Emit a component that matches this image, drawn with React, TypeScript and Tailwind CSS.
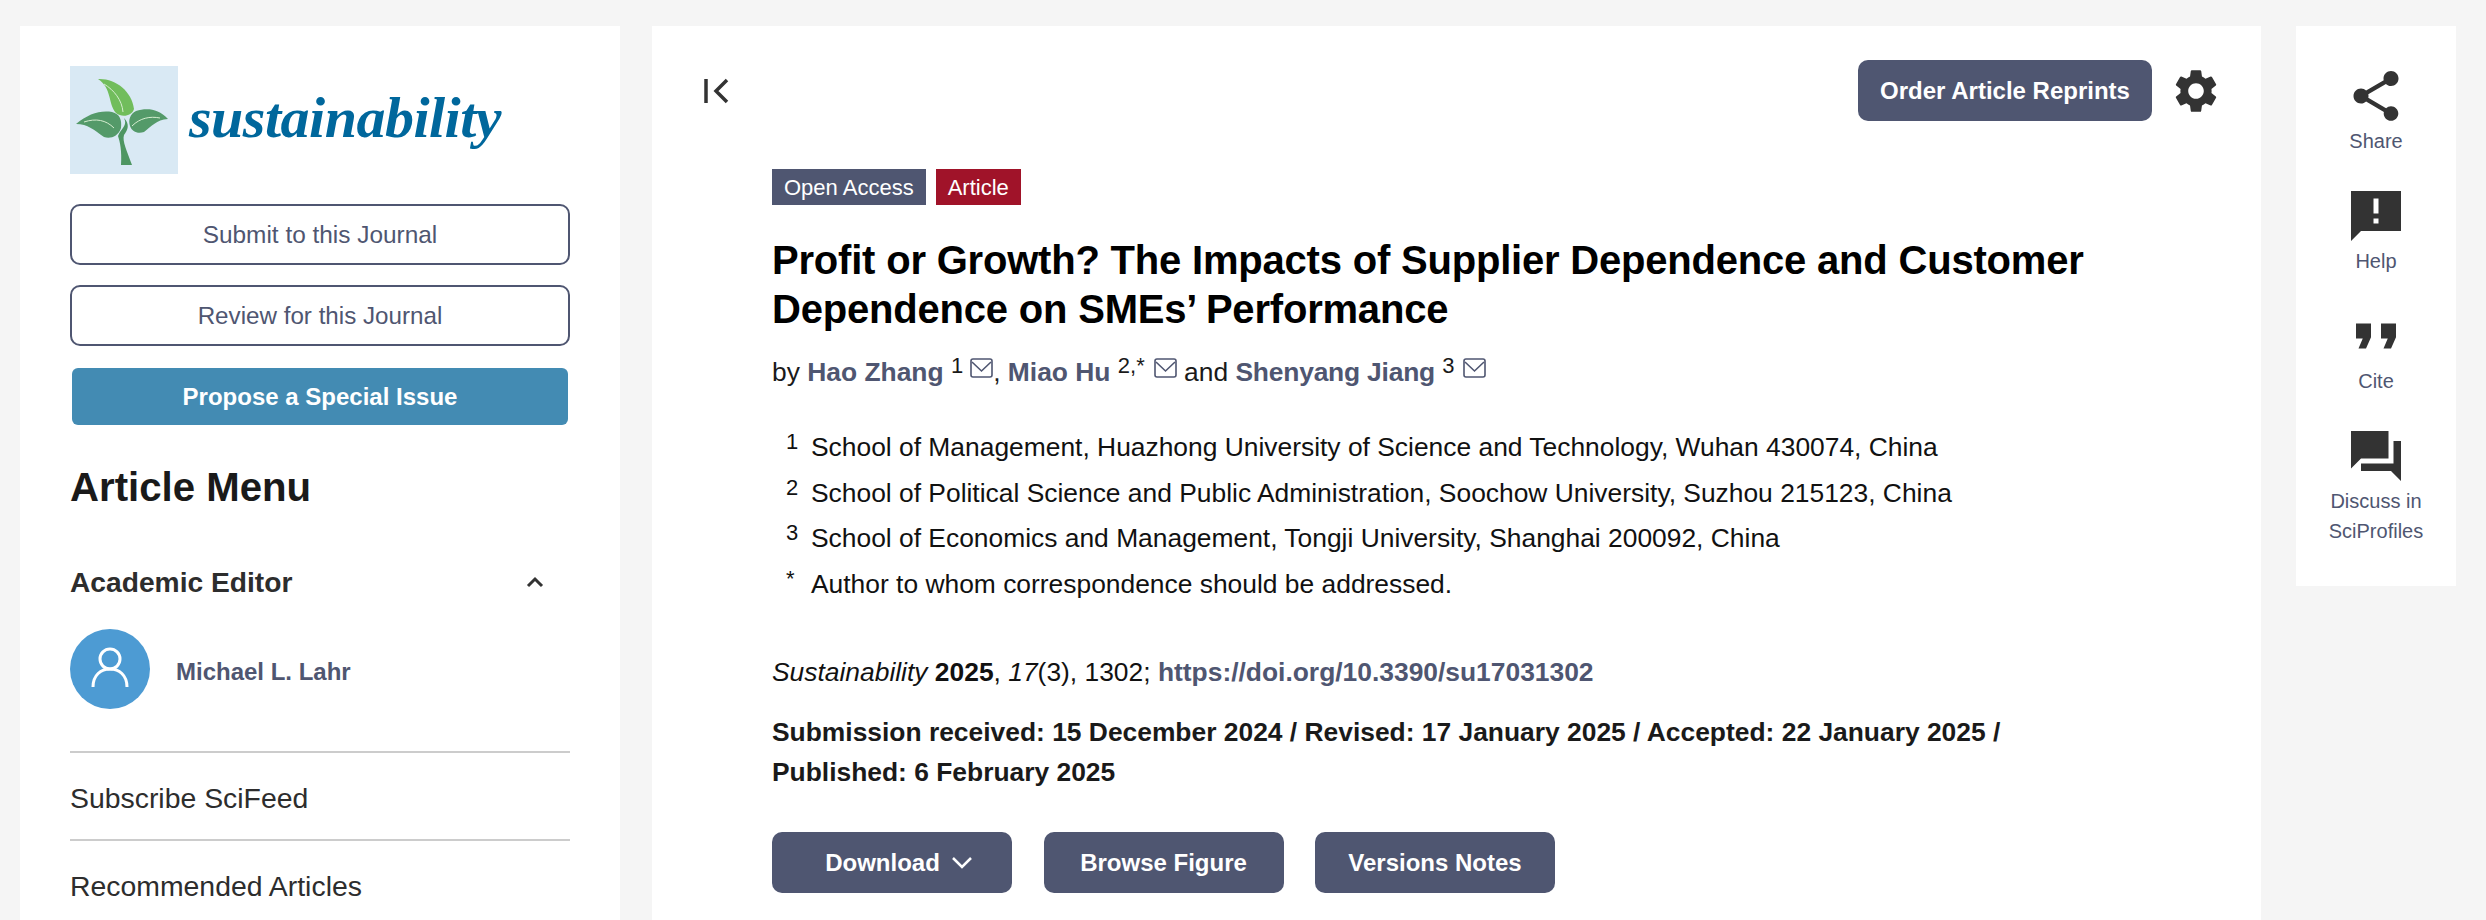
const SANS = "font-['Liberation_Sans',Arial,sans-serif]";

function Logo() {
  return (
    <div className="flex items-center gap-[10px]">
      <svg width="108" height="108" viewBox="0 0 108 108" className="shrink-0">
        <rect width="108" height="108" fill="#d9e9f4" />
        <path d="M54 52 C60 58 58 64 54 69 C52 75 57 85 62 99 L51 99 C52 85 50 76 48 70 C51 62 58 60 54 52Z" fill="#4e9662" />
        <path d="M28 13 C45 12 62 25 64 43 C62 50 52 52 46 47 C38 38 42 22 28 13Z" fill="#71bd5c" />
        <path d="M6 58 C18 48 30 44 42 46 C50 48 52 54 51 62 C48 71 40 73 34 71 C24 64 18 58 6 58Z" fill="#549a69" />
        <path d="M98 53 C88 42 76 42 66 45 C60 48 58 54 60 60 C62 66 68 68 74 66 C82 60 86 54 98 53Z" fill="#549a69" />
        <path d="M34 18 C44 24 52 34 53 46" stroke="#d6eed0" strokeWidth="1" fill="none" />
        <path d="M14 56 C26 52 36 54 44 62" stroke="#d6eed0" strokeWidth="1" fill="none" />
        <path d="M90 52 C80 50 70 52 62 60" stroke="#d6eed0" strokeWidth="1" fill="none" />
      </svg>
      <span className="font-['Liberation_Serif',serif] italic font-bold text-[58px] leading-none text-[#00679c] tracking-[-0.5px] pb-[5px] pl-[1px]">sustainability</span>
    </div>
  );
}

function Sidebar() {
  return (
    <aside className={`w-[600px] shrink-0 bg-white pl-[50px] pr-[50px] pt-[40px] overflow-hidden ${SANS}`}>
      <Logo />
      <div className="mt-[30px] flex flex-col">
        <a className="h-[61px] pt-[1px] flex items-center justify-center border-2 border-[#4f5671] rounded-[10px] text-[24.4px] text-[#4f5671]">Submit to this Journal</a>
        <a className="mt-[20px] h-[61px] pt-[1px] flex items-center justify-center border-2 border-[#4f5671] rounded-[10px] text-[24.2px] text-[#4f5671]">Review for this Journal</a>
        <a className="mt-[22px] mx-[2px] h-[57px] flex items-center justify-center bg-[#438bb3] rounded-[6px] text-[24px] font-bold text-white">Propose a Special Issue</a>
      </div>
      <h2 className="mt-[40px] text-[40.2px] leading-[46px] font-bold text-[#1a1a1a]">Article Menu</h2>
      <div className="mt-[53px] flex items-center justify-between pr-[26px]">
        <span className="text-[28.2px] leading-[36px] font-bold text-[#2d2d2d]">Academic Editor</span>
        <svg width="18" height="12" viewBox="0 0 18 12" fill="none" stroke="#333" strokeWidth="3">
          <path d="M2 10 L9 3 L16 10" />
        </svg>
      </div>
      <div className="mt-[29px] flex items-center gap-[26px]">
        <div className="w-[80px] h-[80px] rounded-full bg-[#4d9bd3] flex items-center justify-center">
          <svg width="40" height="44" viewBox="0 0 40 44" fill="none" stroke="white" strokeWidth="3">
            <circle cx="20" cy="12" r="10" />
            <path d="M3 40 C3 28 11 22 20 22 C29 22 37 28 37 40" />
          </svg>
        </div>
        <span className="text-[24px] font-bold text-[#4f5671] pt-[6px]">Michael L. Lahr</span>
      </div>
      <div className="mt-[42px] border-t-2 border-[#cccccc] h-[88px] pt-[4px] flex items-center text-[28.4px] text-[#2d2d2d]">Subscribe SciFeed</div>
      <div className="border-t-2 border-[#cccccc] h-[88px] pt-[5px] flex items-center text-[28.4px] text-[#2d2d2d]">Recommended Articles</div>
    </aside>
  );
}

function Sup({ children }: { children: React.ReactNode }) {
  return <span className="text-[22px] align-[8px] leading-none">{children}</span>;
}

function Mail({ className }: { className?: string }) {
  return (
    <svg width="23" height="20" viewBox="0 0 23 20" fill="none" stroke="#4f5671" strokeWidth="1.6" className={`inline-block align-[3px] ${className ?? ""}`}>
      <rect x="1" y="1" width="21" height="18" rx="2" />
      <path d="M2 4 L11.5 13 L21 4" />
    </svg>
  );
}

const affiliations = [
  ["1", "School of Management, Huazhong University of Science and Technology, Wuhan 430074, China"],
  ["2", "School of Political Science and Public Administration, Soochow University, Suzhou 215123, China"],
  ["3", "School of Economics and Management, Tongji University, Shanghai 200092, China"],
  ["*", "Author to whom correspondence should be addressed."],
];

function ActionButton({ children }: { children: React.ReactNode }) {
  return (
    <button className="h-[61px] w-[240px] flex items-center justify-center rounded-[10px] bg-[#4f5671] text-white text-[24px] font-bold">
      {children}
    </button>
  );
}

function Main() {
  return (
    <main className={`flex-1 bg-white pt-[34px] overflow-hidden ${SANS}`}>
      <div className="flex items-center justify-between pl-[50px] pr-[39px]">
        <svg width="28" height="26" viewBox="0 0 28 26" fill="none" stroke="#333" strokeWidth="3.5">
          <path d="M4 1 V25" />
          <path d="M25 2 L14 13 L25 24" />
        </svg>
        <div className="flex items-center gap-[18px]">
          <button className="h-[61px] w-[294px] rounded-[10px] bg-[#4f5671] text-white text-[24px] font-bold">Order Article Reprints</button>
          <svg width="52" height="52" viewBox="0 0 24 24" fill="#333">
            <path d="M19.14 12.94c.04-.3.06-.61.06-.94 0-.32-.02-.64-.07-.94l2.03-1.58c.18-.14.23-.41.12-.61l-1.92-3.32c-.12-.22-.37-.29-.59-.22l-2.39.96c-.5-.38-1.03-.7-1.62-.94l-.36-2.54c-.04-.24-.24-.41-.48-.41h-3.84c-.24 0-.43.17-.47.41l-.36 2.54c-.59.24-1.13.57-1.62.94l-2.39-.96c-.22-.08-.47 0-.59.22L2.74 8.87c-.12.21-.08.47.12.61l2.03 1.58c-.05.3-.09.63-.09.94s.02.64.07.94l-2.03 1.58c-.18.14-.23.41-.12.61l1.92 3.32c.12.22.37.29.59.22l2.39-.96c.5.38 1.03.7 1.62.94l.36 2.54c.05.24.24.41.48.41h3.84c.24 0 .44-.17.47-.41l.36-2.54c.59-.24 1.13-.56 1.62-.94l2.39.96c.22.08.47 0 .59-.22l1.92-3.32c.12-.22.07-.47-.12-.61l-2.01-1.58zM12 15.6c-1.98 0-3.6-1.62-3.6-3.6s1.62-3.6 3.6-3.6 3.6 1.62 3.6 3.6-1.62 3.6-3.6 3.6z" />
          </svg>
        </div>
      </div>
      <div className="mt-[48px] pl-[120px] pr-[100px]">
        <div className="flex gap-[10px]">
          <span className="h-[36px] px-[12px] flex items-center bg-[#4f5671] text-white text-[22px]">Open Access</span>
          <span className="h-[36px] px-[12px] flex items-center bg-[#a01329] text-white text-[22px]">Article</span>
        </div>
        <h1 className="mt-[31px] text-[40px] leading-[49px] font-bold text-black tracking-[-0.2px]">
          Profit or Growth? The Impacts of Supplier Dependence and Customer Dependence on SMEs’ Performance
        </h1>
        <div className="mt-[20px] text-[26.4px] leading-[36px] text-[#1a1a1a]">
          by <b className="text-[#4f5671]">Hao Zhang</b> <Sup>1</Sup><Mail className="ml-[7px]" />, <b className="text-[#4f5671]">Miao Hu</b> <Sup>2,*</Sup><Mail className="ml-[9px]" /> and <b className="text-[#4f5671] tracking-[-0.2px]">Shenyang Jiang</b> <Sup>3</Sup><Mail className="ml-[8px]" />
        </div>
        <div className="mt-[35px] flex flex-col text-[26.4px] leading-[45.6px] text-[#111]">
          {affiliations.map(([num, text]) => (
            <div key={num} className="flex pl-[14px]">
              <span className="w-[25px] shrink-0 text-[22px] leading-[34px]">{num}</span>
              <span>{text}</span>
            </div>
          ))}
        </div>
        <div className="mt-[45px] text-[26.4px] leading-[40px] text-[#111]">
          <i>Sustainability</i> <b>2025</b>, <i>17</i>(3), 1302; <b className="text-[#4f5671]">https://doi.org/10.3390/su17031302</b>
        </div>
        <div className="mt-[20px] text-[26.4px] leading-[40px] font-bold text-[#1a1a1a]">
          Submission received: 15 December 2024 / Revised: 17 January 2025 / Accepted: 22 January 2025 /<br />
          Published: 6 February 2025
        </div>
        <div className="mt-[40px] flex gap-[31.5px]">
          <ActionButton>
            <span className="ml-[13px]">Download</span>
            <svg width="20" height="12" viewBox="0 0 20 12" fill="none" stroke="white" strokeWidth="2.5" className="ml-[12px]">
              <path d="M1 1 L10 10 L19 1" />
            </svg>
          </ActionButton>
          <ActionButton>Browse Figure</ActionButton>
          <ActionButton>Versions Notes</ActionButton>
        </div>
      </div>
    </main>
  );
}

const tools = [
  { label: ["Share"], d: "M18 16.08c-.76 0-1.44.3-1.96.77L8.91 12.7c.05-.23.09-.46.09-.7s-.04-.47-.09-.7l7.05-4.11c.54.5 1.25.81 2.04.81 1.66 0 3-1.34 3-3s-1.34-3-3-3-3 1.34-3 3c0 .24.04.47.09.7L8.04 9.81C7.5 9.31 6.79 9 6 9c-1.66 0-3 1.34-3 3s1.34 3 3 3c.79 0 1.5-.31 2.04-.81l7.12 4.16c-.05.21-.08.43-.08.65 0 1.61 1.31 2.92 2.92 2.92 1.61 0 2.92-1.31 2.92-2.92s-1.31-2.92-2.92-2.92z" },
  { label: ["Help"], d: "M22 2H2v20l4-4h16V2zm-9 9h-2V5h2v6zm0 4h-2v-2h2v2z" },
  { label: ["Cite"], d: "M4 7h6v5.5L8 17H5l1.7-4H4z M14 7h6v5.5L18 17h-3l1.7-4H14z" },
  { label: ["Discuss in", "SciProfiles"], d: "M22 6h-3v9H6v3h12l4 4V6z M17 13V2H2v15l4-4h11z" },
];

function RightPanel() {
  return (
    <aside className={`w-[160px] shrink-0 self-start bg-white pt-[40px] pb-[40px] flex flex-col gap-[30px] items-center ${SANS}`}>
      {tools.map((tool) => (
        <div key={tool.label[0]} className="flex flex-col items-center">
          <svg width="60" height="60" viewBox="0 0 24 24" fill="#333">
            <path d={tool.d} />
          </svg>
          {tool.label.map((line) => (
            <span key={line} className="text-[20px] leading-[30px] text-[#4f5671]">{line}</span>
          ))}
        </div>
      ))}
    </aside>
  );
}

export default function App() {
  return (
    <div className="h-[920px] overflow-hidden bg-[#f5f5f5] flex pl-[20px] pr-[30px] pt-[26px] gap-[32px]">
      <Sidebar />
      <Main />
      <div className="ml-[3px] flex">
        <RightPanel />
      </div>
    </div>
  );
}
